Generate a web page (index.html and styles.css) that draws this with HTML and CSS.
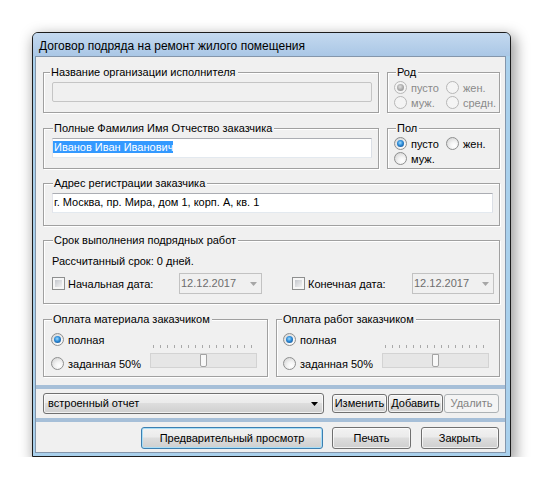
FILE: index.html
```html
<!DOCTYPE html>
<html lang="ru">
<head>
<meta charset="utf-8">
<title>Договор подряда на ремонт жилого помещения</title>
<link rel="stylesheet" href="styles.css">
</head>
<body>
<div class="window">
  <div class="titlebar">Договор подряда на ремонт жилого помещения</div>
  <div class="client">
    <div class="form">
      <div class="row">
        <div class="group g-org">
          <span class="legend lg-6">Название организации исполнителя</span>
          <div class="field field-disabled"></div>
        </div>
        <div class="group g-side">
          <span class="legend lg-8">Род</span>
          <div class="radio-grid is-disabled">
            <span class="opt"><span class="radio checked"></span>пусто</span>
            <span class="opt"><span class="radio"></span>жен.</span>
            <span class="opt"><span class="radio"></span>муж.</span>
            <span class="opt"><span class="radio"></span>средн.</span>
          </div>
        </div>
      </div>
      <div class="row row-extra">
        <div class="group g-org">
          <span class="legend">Полные Фамилия Имя Отчество заказчика</span>
          <div class="field"><span class="sel">Иванов Иван Иванович</span></div>
        </div>
        <div class="group g-side">
          <span class="legend lg-8">Пол</span>
          <div class="radio-grid">
            <span class="opt"><span class="radio checked"></span>пусто</span>
            <span class="opt"><span class="radio"></span>жен.</span>
            <span class="opt"><span class="radio"></span>муж.</span>
          </div>
        </div>
      </div>
      <div class="group g-addr">
        <span class="legend">Адрес регистрации заказчика</span>
        <div class="field">г. Москва, пр. Мира, дом 1, корп. А, кв. 1</div>
      </div>
      <div class="group g-term">
        <span class="legend">Срок выполнения подрядных работ</span>
        <div class="term-line">Рассчитанный срок: 0 дней.</div>
        <div class="term-dates">
          <span class="opt opt-check"><span class="check"></span>Начальная дата:</span>
          <span class="date">12.12.2017<svg class="arrow" width="7" height="4" viewBox="0 0 7 4"><polygon points="0,0 7,0 3.5,4" fill="#a6a6a6"/></svg></span>
          <span></span>
          <span class="opt opt-check"><span class="check"></span>Конечная дата:</span>
          <span class="date">12.12.2017<svg class="arrow" width="7" height="4" viewBox="0 0 7 4"><polygon points="0,0 7,0 3.5,4" fill="#a6a6a6"/></svg></span>
        </div>
      </div>
      <div class="row row-extra">
        <div class="group g-pay">
          <span class="legend lg-8">Оплата материала заказчиком</span>
          <div class="pay-grid">
            <span class="opt"><span class="radio checked"></span>полная</span>
            <span class="opt"><span class="radio"></span>заданная 50%</span>
            <div class="slider">
              <div class="ticks"></div>
              <div class="track"><span class="thumb"></span></div>
            </div>
          </div>
        </div>
        <div class="group g-pay g-pay-r">
          <span class="legend lg-5">Оплата работ заказчиком</span>
          <div class="pay-grid">
            <span class="opt"><span class="radio checked"></span>полная</span>
            <span class="opt"><span class="radio"></span>заданная 50%</span>
            <div class="slider">
              <div class="ticks"></div>
              <div class="track"><span class="thumb"></span></div>
            </div>
          </div>
        </div>
      </div>
    </div>
    <div class="sep sep-first"></div>
    <div class="toolbar">
      <div class="combo">встроенный отчет<svg class="arrow" width="7" height="4" viewBox="0 0 7 4"><polygon points="0,0 7,0 3.5,4" fill="#000"/></svg></div>
      <button class="btn tb-btn">Изменить</button>
      <button class="btn tb-btn">Добавить</button>
      <button class="btn tb-btn" disabled>Удалить</button>
    </div>
    <div class="sep"></div>
    <div class="actions">
      <button class="btn act-btn btn-default btn-preview">Предварительный просмотр</button>
      <button class="btn act-btn btn-print">Печать</button>
      <button class="btn act-btn btn-close">Закрыть</button>
    </div>
  </div>
</div>
</body>
</html>
```
FILE: styles.css
```css
* { box-sizing: border-box; }

body {
  margin: 0;
  background: #fff;
  font-family: "Liberation Sans", Arial, sans-serif;
  font-size: 11px;
  color: #000;
}

.window {
  width: 479px;
  height: 425px;
  margin: 32px 0 0 32px;
  border: 1px solid #1c1c1c;
  border-radius: 6px 6px 0 0;
  background: #a9d0ec;
  box-shadow: 3px 5px 14px 2px rgba(0, 0, 0, 0.38);
  display: flex;
  flex-direction: column;
}

.titlebar {
  flex: none;
  height: 23px;
  padding: 5px 0 0 6px;
  line-height: 16px;
  font-size: 12px;
  white-space: nowrap;
  background: linear-gradient(#c4d9ef, #aac7e6);
  border-radius: 5px 5px 0 0;
}

.client {
  flex: 1;
  margin: 0 4px 3px 2px;
  border: 1px solid #8496ab;
  background: #f0f0f0;
  display: flex;
  flex-direction: column;
}

.form {
  padding: 15px 5px 0 7px;
  display: flex;
  flex-direction: column;
  gap: 14px;
}

.row { display: flex; gap: 8px; }
.row-extra { margin-top: 1px; }

.group {
  position: relative;
  border: 1px solid #a0a0a0;
  box-shadow: inset 1px 1px 0 #fff, 1px 1px 0 #fff;
}

.legend {
  position: absolute;
  top: -7px;
  left: 9px;
  padding: 0 2px 0 1px;
  line-height: 13px;
  background: #f0f0f0;
  white-space: nowrap;
}
.lg-5 { left: 5px; }
.lg-6 { left: 6px; }
.lg-8 { left: 8px; }

.g-org { width: 336px; height: 41px; padding: 9px 6px 0 8px; }
.g-side { width: 113px; height: 41px; padding: 7px 0 0 6px; }
.g-addr { height: 43px; padding: 9px 6px 0 8px; }
.g-term { height: 64px; padding: 13px 5px 0 8px; }
.g-pay { width: 225px; height: 58px; padding: 12px 10px 0 7px; }
.g-pay-r { width: 224px; padding-left: 6px; }

.field {
  height: 20px;
  border: 1px solid;
  border-color: #abadb3 #dbdfe6 #e3e9ef #e2e3ea;
  background: #fff;
  line-height: 16px;
  padding: 0 1px;
  white-space: nowrap;
  overflow: hidden;
}
.field-disabled {
  background: #f0f0f0;
  border-color: #c5c5c5;
  border-radius: 2px;
}
.sel {
  background: #3399ff;
  color: #fff;
  margin-left: -1px;
  padding-left: 1px;
}

.radio-grid {
  display: grid;
  grid-template-columns: 52px auto;
  grid-auto-rows: 15px;
}
.opt {
  display: flex;
  align-items: center;
  gap: 4px;
  white-space: nowrap;
}
.opt-check { gap: 3px; }

.radio {
  flex: none;
  width: 13px;
  height: 13px;
  border-radius: 50%;
  border: 1px solid #8e8f8f;
  background: radial-gradient(circle at 65% 70%, #ffffff 0, #f4f4f4 35%, #d3d3d3 90%);
  display: grid;
  place-items: center;
}
.radio.checked::after {
  content: "";
  width: 7px;
  height: 7px;
  border-radius: 50%;
  background: radial-gradient(circle at 45% 40%, #9fdcff 0, #2c8ad6 45%, #0c3f7e 100%);
}
.is-disabled .opt { color: #8a8a8a; }
.is-disabled .radio {
  border-color: #b7b7b7;
  background: #f4f4f4;
}
.is-disabled .radio.checked::after {
  background: radial-gradient(circle at 45% 40%, #e0e0e0 0, #a8a8a8 55%, #8a8a8a 100%);
}

.check {
  flex: none;
  width: 13px;
  height: 13px;
  border: 1px solid #8e8f8f;
  padding: 2px;
  background: linear-gradient(135deg, #c4c7cd, #f2f2f2) content-box, #f6f6f6;
}

.term-line { line-height: 15px; margin-bottom: 4px; white-space: nowrap; }
.term-dates {
  display: grid;
  grid-template-columns: 127px 83px 1fr 120px 82px;
  align-items: center;
  height: 21px;
}
.date {
  height: 21px;
  border: 1px solid #c2c2c2;
  background: #f0f0f0;
  color: #6d6d6d;
  line-height: 19px;
  padding: 0 4px 0 1px;
  display: flex;
  justify-content: space-between;
  align-items: center;
}

.pay-grid {
  display: grid;
  grid-template-columns: 1fr 107px;
  grid-template-rows: 15px 15px;
  row-gap: 9px;
}
.pay-grid .opt:nth-child(1) { grid-row: 1; grid-column: 1; }
.pay-grid .opt:nth-child(2) { grid-row: 2; grid-column: 1; }
.slider {
  grid-column: 2;
  grid-row: 1 / 3;
  align-self: end;
  margin-bottom: 3px;
  display: flex;
  flex-direction: column;
}
.ticks {
  width: 99px;
  height: 3px;
  margin: 0 0 5px 3px;
  background: repeating-linear-gradient(to right, #a9a9a9 0 1px, transparent 1px 7px);
}
.track {
  height: 15px;
  border: 1px solid #d3d3d3;
  background: #e6e6e6;
  display: flex;
  justify-content: center;
}
.thumb {
  width: 7px;
  height: 13px;
  border: 1px solid #a3a3a3;
  border-radius: 0 0 2px 2px;
  background: #f8f8f8;
}

.sep { height: 4px; background: #a6bfd8; flex: none; }
.sep-first { margin-top: 8px; }

.toolbar {
  display: flex;
  align-items: center;
  padding: 4px 6px 4px 7px;
}
.combo {
  width: 281px;
  height: 21px;
  margin-right: 8px;
  padding: 0 5px 0 4px;
  border: 1px solid #707070;
  border-radius: 3px;
  background: linear-gradient(#f2f2f2, #ebebeb 45%, #dddddd 50%, #cfcfcf);
  box-shadow: inset 0 0 0 1px rgba(255, 255, 255, 0.7);
  line-height: 19px;
  display: flex;
  align-items: center;
  justify-content: space-between;
}

.btn {
  font: inherit;
  color: #000;
  padding: 0;
  border: 1px solid #707070;
  border-radius: 3px;
  background: linear-gradient(#f2f2f2, #ebebeb 45%, #dddddd 50%, #cfcfcf);
  box-shadow: inset 0 0 0 1px rgba(255, 255, 255, 0.7);
  white-space: nowrap;
}
.btn:disabled {
  background: #f4f4f4;
  border-color: #adb2b5;
  color: #838383;
  box-shadow: none;
}
.tb-btn { width: 55px; height: 19px; line-height: 17px; }
.tb-btn + .tb-btn { margin-left: 1px; }

.actions {
  display: flex;
  justify-content: flex-end;
  padding: 5px 6px 0 0;
}
.act-btn { height: 22px; line-height: 20px; }
.btn-default {
  border-color: #3c7fb1;
  box-shadow: inset 0 0 0 1px #a9def7;
}
.btn-preview { width: 182px; }
.btn-print { width: 79px; margin-left: 9px; }
.btn-close { width: 78px; margin-left: 10px; }
```
